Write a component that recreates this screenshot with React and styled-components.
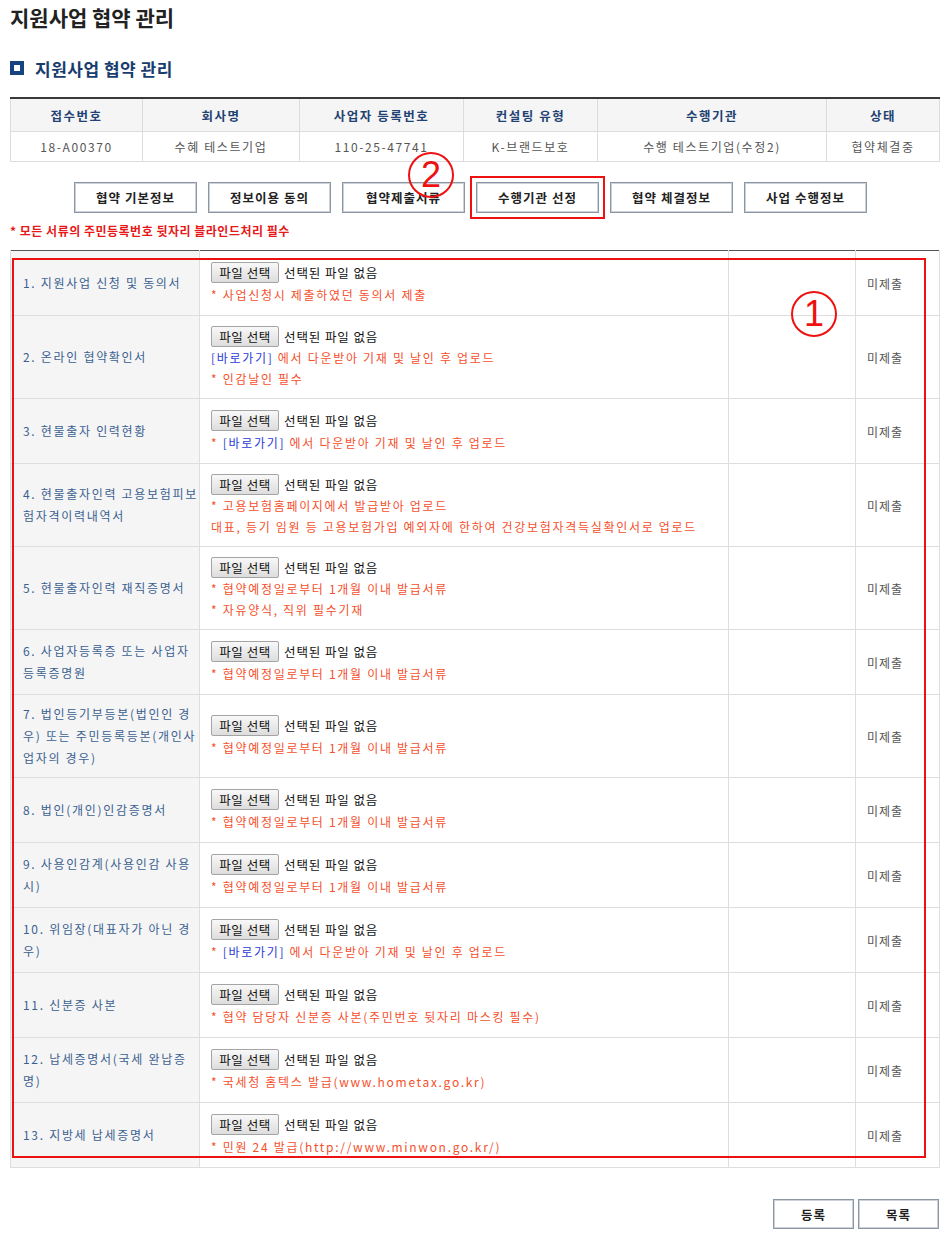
import React from 'react';
import styled, { createGlobalStyle, css } from 'styled-components';

const GlobalStyle = createGlobalStyle`
  body {
    margin: 0;
    background: #fff;
    font-family: 'Noto Sans CJK KR', 'Noto Sans', sans-serif;
    color: #333;
  }
`;

const Page = styled.div`
  position: relative;
  width: 929px;
  padding: 0 10px 14px;
`;

const PageTitle = styled.h1`
  margin: 0;
  font-size: 21px;
  line-height: 34px;
  font-weight: 700;
  color: #222;
`;

const SectionTitle = styled.h2`
  display: flex;
  align-items: center;
  gap: 11px;
  height: 28px;
  margin: 20px 0 0;
  font-size: 17px;
  letter-spacing: 0.5px;
  font-weight: 700;
  color: #183d6d;
`;

const SquareIcon = styled.span`
  width: 14px;
  height: 14px;
  box-sizing: border-box;
  border: 4px solid #17447e;
  background: #fff;
`;

const InfoTable = styled.table`
  width: 100%;
  margin-top: 15px;
  border-collapse: collapse;
  border-top: 2px solid #3a3a3a;
  table-layout: fixed;
  font-size: 12px;
`;

const InfoHead = styled.th`
  height: 32px;
  padding: 0;
  background: #f5f5f5;
  border: 1px solid #dcdcdc;
  border-top: none;
  color: #1f4273;
  font-size: 12.5px;
  font-weight: 700;
  letter-spacing: 1.5px;
`;

const InfoCell = styled.td`
  height: 29px;
  padding: 0;
  text-align: center;
  border: 1px solid #dcdcdc;
  color: #555;
  letter-spacing: 1.6px;
`;

const TabBar = styled.div`
  display: flex;
  justify-content: center;
  gap: 11px;
  margin: 20px 0 0 -8px;
`;

const TabButton = styled.button`
  width: 123px;
  height: 31px;
  padding: 0;
  background: #fff;
  border: 1px solid #8c96a3;
  box-shadow: inset 0 0 0 1px #cdd2d8;
  font-family: inherit;
  font-size: 12.5px;
  letter-spacing: 1px;
  font-weight: 700;
  color: #222;
  ${(p) =>
    p.$marked &&
    css`
      outline: 2px solid #ee1111;
      outline-offset: 4px;
    `}
`;

const Notice = styled.p`
  margin: 8px 0 0;
  line-height: 20px;
  font-size: 12px;
  letter-spacing: 0.5px;
  font-weight: 700;
  color: #e81818;
`;

const DocWrap = styled.div`
  position: relative;
  margin-top: 9px;
`;

const DocTable = styled.table`
  width: 100%;
  border-collapse: collapse;
  border-top: 1px solid #555;
  table-layout: fixed;
  font-size: 12px;
`;

const DocRow = styled.tr`
  height: ${(p) => (p.$tall ? 83 : 65)}px;
`;

const LabelCell = styled.td`
  padding: 0 0 0 12px;
  background: #f5f5f5;
  border: 1px solid #dedede;
  border-top: none;
  color: #3b6190;
  line-height: 22px;
  letter-spacing: 1.7px;
  white-space: nowrap;
  vertical-align: middle;
`;

const ContentCell = styled.td`
  padding: 0 11px;
  border: 1px solid #dedede;
  border-top: none;
  vertical-align: middle;
`;

const StatusCell = styled.td`
  padding: 0 11px;
  border: 1px solid #dedede;
  border-top: none;
  color: #555;
  letter-spacing: 1px;
  vertical-align: middle;
`;

const FileLine = styled.div`
  display: flex;
  align-items: center;
  gap: 5px;
  height: 22px;
  font-size: 12.5px;
  letter-spacing: 0.9px;
  color: #111;
`;

const FileButton = styled.span`
  display: inline-flex;
  align-items: center;
  justify-content: center;
  width: 68px;
  height: 21px;
  box-sizing: border-box;
  border: 1px solid #a4a4a4;
  border-radius: 2px;
  background: linear-gradient(#f8f8f8, #dddddd);
  font-size: 12.5px;
  letter-spacing: 0.5px;
  color: #111;
`;

const NoteLine = styled.div`
  line-height: 21px;
  color: #f5502c;
  letter-spacing: 1.7px;
  white-space: nowrap;
`;

const Shortcut = styled.span`
  color: #2a3bd6;
`;

const MarkBox = styled.div`
  position: absolute;
  left: 2px;
  top: 8px;
  width: 914px;
  height: 900px;
  box-sizing: border-box;
  border: 2px solid #ee1111;
  pointer-events: none;
`;

const MarkCircle = styled.div`
  position: absolute;
  left: ${(p) => p.$x - 23}px;
  top: ${(p) => p.$y - 23}px;
  width: 46px;
  height: 46px;
  box-sizing: border-box;
  border: 2px solid #ee1111;
  border-radius: 50%;
  display: flex;
  align-items: center;
  justify-content: center;
  font-family: 'Liberation Sans', Arial, sans-serif;
  font-size: 36px;
  line-height: 1;
  color: #ee1111;
  background: transparent;
`;

const Actions = styled.div`
  display: flex;
  justify-content: flex-end;
  gap: 4px;
  margin-top: 31px;
`;

const ActionButton = styled.button`
  width: 81px;
  height: 30px;
  padding: 0;
  background: #fff;
  border: 1px solid #8c96a3;
  box-shadow: inset 0 0 0 1px #cdd2d8;
  font-family: inherit;
  font-size: 12.5px;
  letter-spacing: 1px;
  font-weight: 700;
  color: #222;
`;

const infoCols = [132, 157, 164, 134, 229, 113];
const infoHeads = ['접수번호', '회사명', '사업자 등록번호', '컨설팅 유형', '수행기관', '상태'];
const infoValues = ['18-A00370', '수혜 테스트기업', '110-25-47741', 'K-브랜드보호', '수행 테스트기업(수정2)', '협약체결중'];

const tabs = ['협약 기본정보', '정보이용 동의', '협약제출서류', '수행기관 선정', '협약 체결정보', '사업 수행정보'];

const ISSUE = '* 협약예정일로부터 1개월 이내 발급서류';
const LINK = '[바로가기]';

const docs = [
  { label: ['1. 지원사업 신청 및 동의서'], notes: ['* 사업신청시 제출하였던 동의서 제출'] },
  { label: ['2. 온라인 협약확인서'], notes: ['[바로가기] 에서 다운받아 기재 및 날인 후 업로드', '* 인감날인 필수'], tall: true },
  { label: ['3. 현물출자 인력현황'], notes: ['* [바로가기] 에서 다운받아 기재 및 날인 후 업로드'] },
  {
    label: ['4. 현물출자인력 고용보험피보', '험자격이력내역서'],
    notes: ['* 고용보험홈페이지에서 발급받아 업로드', '대표, 등기 임원 등 고용보험가입 예외자에 한하여 건강보험자격득실확인서로 업로드'],
    tall: true,
  },
  { label: ['5. 현물출자인력 재직증명서'], notes: [ISSUE, '* 자유양식, 직위 필수기재'], tall: true },
  { label: ['6. 사업자등록증 또는 사업자', '등록증명원'], notes: [ISSUE] },
  { label: ['7. 법인등기부등본(법인인 경', '우) 또는 주민등록등본(개인사', '업자의 경우)'], notes: [ISSUE], tall: true },
  { label: ['8. 법인(개인)인감증명서'], notes: [ISSUE] },
  { label: ['9. 사용인감계(사용인감 사용', '시)'], notes: [ISSUE] },
  { label: ['10. 위임장(대표자가 아닌 경', '우)'], notes: ['* [바로가기] 에서 다운받아 기재 및 날인 후 업로드'] },
  { label: ['11. 신분증 사본'], notes: ['* 협약 담당자 신분증 사본(주민번호 뒷자리 마스킹 필수)'] },
  { label: ['12. 납세증명서(국세 완납증', '명)'], notes: ['* 국세청 홈텍스 발급(www.hometax.go.kr)'] },
  { label: ['13. 지방세 납세증명서'], notes: ['* 민원 24 발급(http://www.minwon.go.kr/)'] },
];

const Note = ({ text }) => {
  const parts = text.split(LINK);
  return (
    <NoteLine>
      {parts.map((part, i) => (
        <React.Fragment key={i}>
          {i > 0 && <Shortcut>{LINK}</Shortcut>}
          {part}
        </React.Fragment>
      ))}
    </NoteLine>
  );
};

const App = () => {
  return (
    <>
      <GlobalStyle />
      <Page>
        <PageTitle>지원사업 협약 관리</PageTitle>
        <SectionTitle>
          <SquareIcon />
          지원사업 협약 관리
        </SectionTitle>

        <InfoTable>
          <colgroup>
            {infoCols.map((w, i) => (
              <col key={i} style={{ width: w }} />
            ))}
          </colgroup>
          <thead>
            <tr>
              {infoHeads.map((h) => (
                <InfoHead key={h}>{h}</InfoHead>
              ))}
            </tr>
          </thead>
          <tbody>
            <tr>
              {infoValues.map((v) => (
                <InfoCell key={v}>{v}</InfoCell>
              ))}
            </tr>
          </tbody>
        </InfoTable>

        <TabBar>
          {tabs.map((t, i) => (
            <TabButton key={t} $marked={i === 3}>
              {t}
            </TabButton>
          ))}
        </TabBar>

        <Notice>* 모든 서류의 주민등록번호 뒷자리 블라인드처리 필수</Notice>

        <DocWrap>
          <DocTable>
            <colgroup>
              <col style={{ width: 189 }} />
              <col style={{ width: 529 }} />
              <col style={{ width: 127 }} />
              <col style={{ width: 84 }} />
            </colgroup>
            <tbody>
              {docs.map((d, i) => (
                <DocRow key={i} $tall={d.tall}>
                  <LabelCell>
                    {d.label.map((line, j) => (
                      <div key={j}>{line}</div>
                    ))}
                  </LabelCell>
                  <ContentCell>
                    <FileLine>
                      <FileButton>파일 선택</FileButton>
                      선택된 파일 없음
                    </FileLine>
                    {d.notes.map((n, j) => (
                      <Note key={j} text={n} />
                    ))}
                  </ContentCell>
                  <ContentCell />
                  <StatusCell>미제출</StatusCell>
                </DocRow>
              ))}
            </tbody>
          </DocTable>
          <MarkBox />
        </DocWrap>

        <Actions>
          <ActionButton>등록</ActionButton>
          <ActionButton>목록</ActionButton>
        </Actions>

        <MarkCircle $x={431} $y={175}>2</MarkCircle>
        <MarkCircle $x={814} $y={314}>1</MarkCircle>
      </Page>
    </>
  );
};

export default App;
